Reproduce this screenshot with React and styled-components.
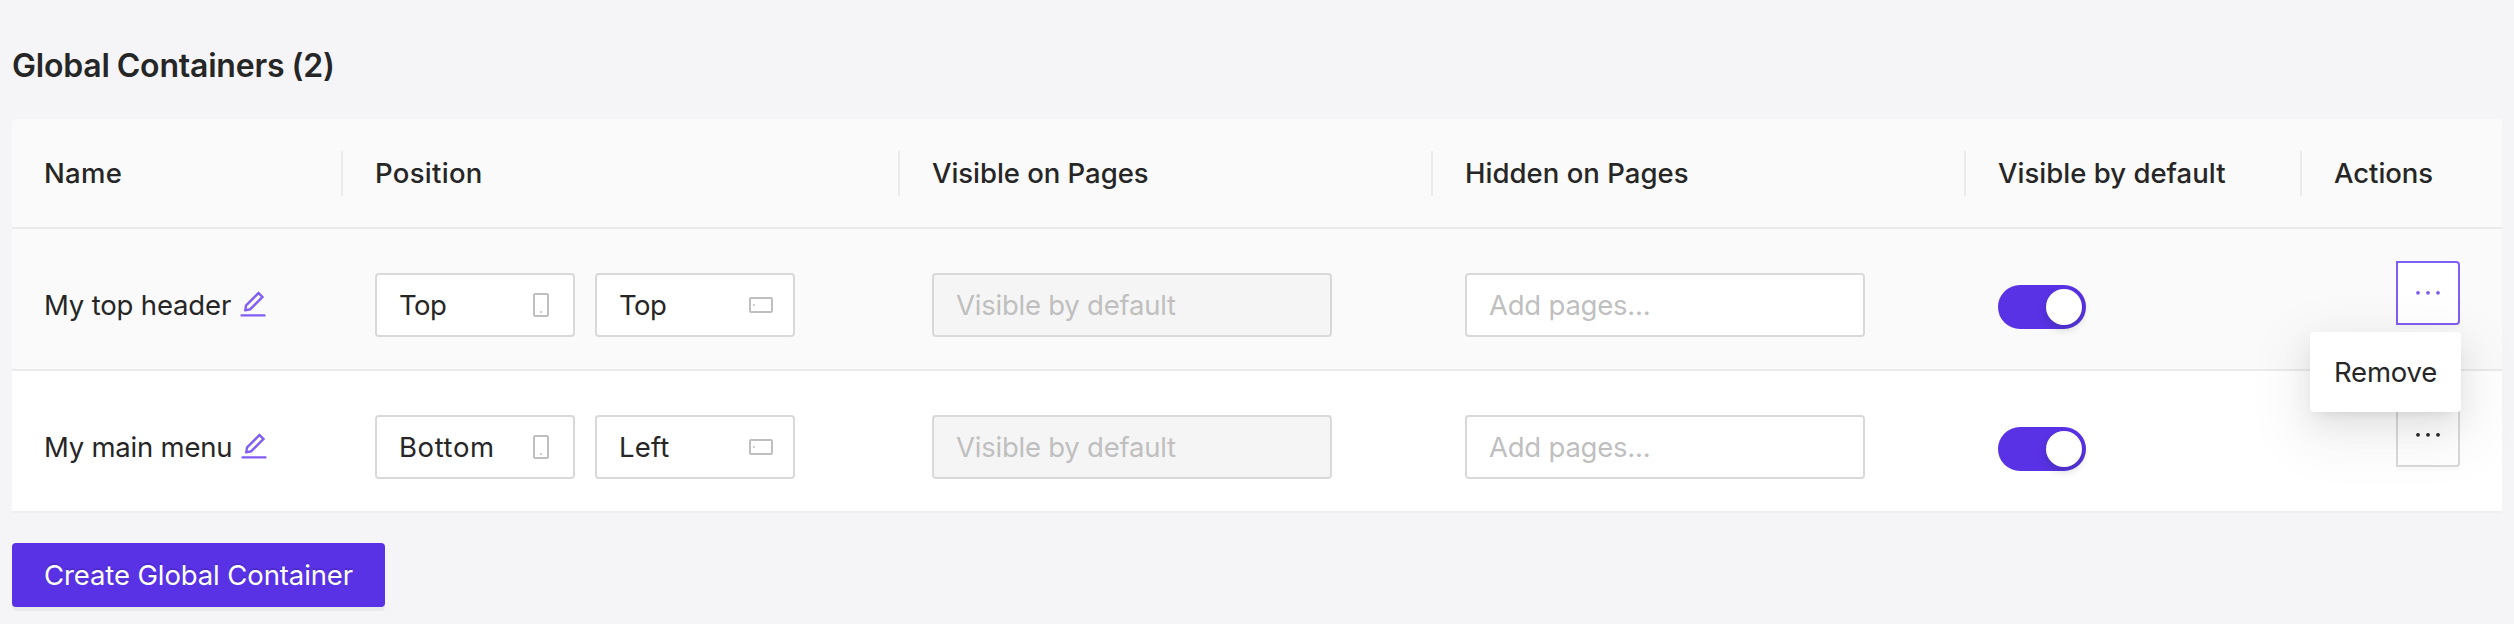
import React from "react";
import styled, { createGlobalStyle, css } from "styled-components";
import { AiOutlineEdit } from "react-icons/ai";

const color = {
  page: "#f5f5f8",
  header: "#fafafa",
  line: "#ebebeb",
  border: "#d9d9d9",
  text: "#262626",
  muted: "#bfbfbf",
  primary: "#5932e6",
  accent: "#815ef3",
};

const GlobalStyle = createGlobalStyle`
  *, *::before, *::after { box-sizing: border-box; }
  body {
    margin: 0;
    background: ${color.page};
    color: ${color.text};
    font-family: Inter, "Liberation Sans", sans-serif;
    font-size: 27.5px;
    font-weight: 430;
    line-height: 44px;
  }
`;

const Page = styled.main`
  height: 624px;
  overflow: hidden;
  padding: 41px 12px 0;
`;

const Title = styled.h1`
  margin: 0 0 28px;
  font-size: 32px;
  font-weight: 600;
  line-height: 50px;
  letter-spacing: -0.2px;
  word-spacing: -0.8px;
`;

const Label = styled.span`
  white-space: nowrap;
  letter-spacing: ${(p) => p.$tracking || 0}px;
`;

const Table = styled.section`
  border-radius: 4px 4px 0 0;
`;

const columns = css`
  display: grid;
  grid-template-columns: 331px 557px 533px 533px 336px 200px;
`;

const HeaderRow = styled.div`
  ${columns}
  align-items: center;
  height: 110px;
  background: ${color.header};
  border-bottom: 2px solid ${color.line};
  border-radius: 4px 4px 0 0;
`;

const HeaderCell = styled.div`
  height: 45px;
  padding-left: 32px;
  font-weight: 500;
  line-height: 45px;
  border-right: 2px solid ${color.line};

  &:last-child { border-right: 0; }
`;

const Row = styled.div`
  ${columns}
  height: 142px;
  background: ${(p) => (p.$hovered ? "#fafafa" : "#fff")};
  border-bottom: 2px solid ${color.line};

  &:last-child { border-bottom-color: #f0f0f0; }
`;

const Cell = styled.div`
  display: flex;
  align-items: flex-start;
  gap: 20px;
  padding: 44px 0 0 32px;
`;

const NameCell = styled(Cell)`
  gap: 5.5px;
  padding-top: 54px;
`;

const EditIcon = styled(AiOutlineEdit)`
  flex: none;
  width: 32px;
  height: 32px;
  margin-top: 5px;
  color: ${color.accent};
`;

const SwitchCell = styled(Cell)`
  padding-top: 56px;
`;

const ActionCell = styled(Cell)`
  justify-content: flex-end;
  padding: 32px 42px 0 0;
`;

const Field = styled.div`
  display: flex;
  align-items: center;
  justify-content: space-between;
  width: ${(p) => p.$width}px;
  height: 64px;
  padding: 0 20px 0 22px;
  background: ${(p) => (p.$disabled ? "#f5f5f5" : "#fff")};
  border: 2px solid ${color.border};
  border-radius: 4px;
  color: ${(p) => (p.$placeholder ? color.muted : color.text)};
`;

const Switch = styled.div`
  display: flex;
  justify-content: flex-end;
  width: 88px;
  height: 44px;
  padding: 4px;
  background: ${color.primary};
  border-radius: 22px;
`;

const Knob = styled.span`
  width: 36px;
  height: 36px;
  background: #fff;
  border-radius: 50%;
  box-shadow: 0 4px 8px rgba(0, 35, 11, 0.2);
`;

const MenuAnchor = styled.div`
  position: relative;
`;

const MoreButton = styled.button`
  display: flex;
  align-items: center;
  justify-content: center;
  width: 64px;
  height: 64px;
  padding: 0;
  background: #fff;
  color: ${(p) => (p.$active ? color.accent : color.text)};
  border: 2px solid ${(p) => (p.$active ? color.accent : color.border)};
  border-radius: 0 4px 4px 0;
  box-shadow: 0 4px 0 rgba(0, 0, 0, 0.015);
`;

const Menu = styled.div`
  position: absolute;
  z-index: 2;
  top: 71px;
  right: -1px;
  width: 151px;
  height: 80px;
  padding-left: 24px;
  line-height: 80px;
  background: #fff;
  border-radius: 4px;
  box-shadow:
    0 6px 12px -8px rgba(0, 0, 0, 0.12),
    0 12px 32px rgba(0, 0, 0, 0.08),
    0 18px 56px 16px rgba(0, 0, 0, 0.05);
`;

const CreateButton = styled.button`
  display: block;
  width: 373px;
  height: 64px;
  margin-top: 30px;
  padding: 0 0 0 32px;
  background: ${color.primary};
  border: 0;
  border-radius: 4px;
  box-shadow: 0 4px 0 rgba(0, 0, 0, 0.043);
  color: #fff;
  font: inherit;
  text-align: left;
  text-shadow: 0 -2px 0 rgba(0, 0, 0, 0.12);
`;

function PortraitIcon() {
  return (
    <svg width="24" height="24" fill="none" stroke={color.muted} strokeWidth="2">
      <rect x="5" y="1" width="14" height="22" rx="1" />
      <circle cx="12" cy="19" r="1" fill={color.muted} stroke="none" />
    </svg>
  );
}

function LandscapeIcon() {
  return (
    <svg width="24" height="24" fill="none" stroke={color.muted} strokeWidth="2">
      <rect x="1" y="5" width="22" height="14" rx="1" />
      <circle cx="4.9" cy="12" r="1" fill={color.muted} stroke="none" />
    </svg>
  );
}

function Dots() {
  return (
    <svg width="28" height="28" fill="currentColor">
      <circle cx="4" cy="13.8" r="1.9" />
      <circle cx="14" cy="13.8" r="1.9" />
      <circle cx="24" cy="13.8" r="1.9" />
    </svg>
  );
}

const headers = [
  ["Name", 0.3],
  ["Position", 0.3],
  ["Visible on Pages", -0.04],
  ["Hidden on Pages", 0.03],
  ["Visible by default", 0.02],
  ["Actions", -0.04],
];

const containers = [
  {
    name: ["My top header", -0.16],
    portrait: ["Top", -0.5],
    landscape: ["Top", -0.5],
    menuOpen: true,
  },
  {
    name: ["My main menu", -0.22],
    portrait: ["Bottom", 0.6],
    landscape: ["Left", 0.16],
    menuOpen: false,
  },
];

function Text({ value }) {
  return <Label $tracking={value[1]}>{value[0]}</Label>;
}

function ContainerRow({ item }) {
  return (
    <Row $hovered={item.menuOpen}>
      <NameCell>
        <Text value={item.name} />
        <EditIcon />
      </NameCell>
      <Cell>
        <Field $width={200}>
          <Text value={item.portrait} />
          <PortraitIcon />
        </Field>
        <Field $width={200}>
          <Text value={item.landscape} />
          <LandscapeIcon />
        </Field>
      </Cell>
      <Cell>
        <Field $width={400} $disabled $placeholder>
          <Text value={["Visible by default", -0.23]} />
        </Field>
      </Cell>
      <Cell>
        <Field $width={400} $placeholder>
          <Text value={["Add pages...", -0.22]} />
        </Field>
      </Cell>
      <SwitchCell>
        <Switch role="switch" aria-checked="true">
          <Knob />
        </Switch>
      </SwitchCell>
      <ActionCell>
        <MenuAnchor>
          <MoreButton $active={item.menuOpen}>
            <Dots />
          </MoreButton>
          {item.menuOpen && (
            <Menu>
              <Text value={["Remove", -0.2]} />
            </Menu>
          )}
        </MenuAnchor>
      </ActionCell>
    </Row>
  );
}

export default function App() {
  return (
    <>
      <GlobalStyle />
      <Page>
        <Title>Global Containers (2)</Title>
        <Table>
          <HeaderRow>
            {headers.map((h) => (
              <HeaderCell key={h[0]}>
                <Text value={h} />
              </HeaderCell>
            ))}
          </HeaderRow>
          {containers.map((item) => (
            <ContainerRow key={item.name[0]} item={item} />
          ))}
        </Table>
        <CreateButton>
          <Text value={["Create Global Container", -0.11]} />
        </CreateButton>
      </Page>
    </>
  );
}
